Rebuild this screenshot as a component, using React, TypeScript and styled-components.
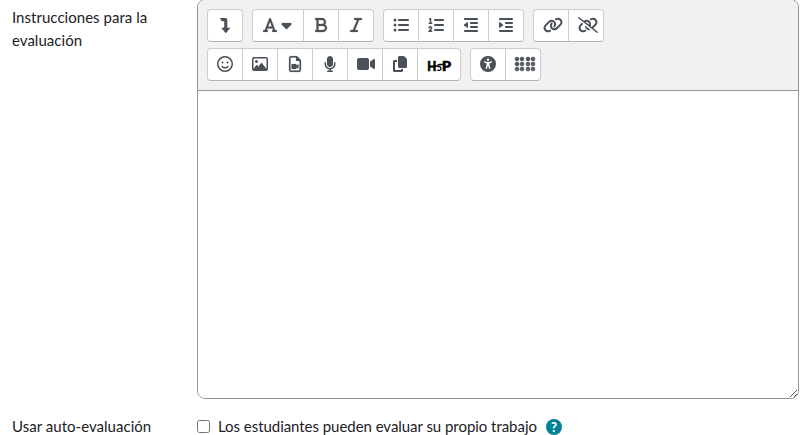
import React from 'react';
import styled, { createGlobalStyle } from 'styled-components';
import type { IconType } from 'react-icons';
import {
  FaFont, FaCaretDown, FaBold, FaItalic, FaListUl, FaListOl, FaOutdent, FaIndent,
  FaLink, FaLinkSlash, FaRegFaceSmile, FaRegImage, FaRegFileVideo, FaMicrophone, FaVideo, FaCopy,
  FaUniversalAccess, FaBraille,
} from 'react-icons/fa6';

const GlobalStyle = createGlobalStyle`
  *, *::before, *::after { box-sizing: border-box; }
  body {
    margin: 0;
    background: #fff;
    color: #1d2125;
    font-family: Lato, "Liberation Sans", sans-serif;
    font-size: 15px;
    line-height: 23px;
    overflow: hidden;
  }
`;

const Form = styled.form`
  width: 807px;
  height: 435px;
  overflow: hidden;
`;

const Row = styled.div<{ $gapTop?: number }>`
  display: grid;
  grid-template-columns: 185px 602px;
  margin-top: ${({ $gapTop = 0 }) => $gapTop}px;
  padding-left: 12px;
`;

const Label = styled.label<{ $top?: number }>`
  padding-top: ${({ $top = 0 }) => $top}px;
  padding-right: 30px;
  letter-spacing: 0.03px;
`;

const Editor = styled.div`
  position: relative;
  height: 400px;
  margin-top: -1px;
  border: 1px solid #8f959e;
  border-radius: 8px;
  overflow: hidden;
`;

const Toolbar = styled.div`
  display: flex;
  flex-direction: column;
  gap: 6px;
  height: 91px;
  padding: 9px 9px 0;
  background: #f1f1f1;
  border-bottom: 1px solid #8f959e;
`;

const ToolRow = styled.div`
  display: flex;
  gap: 9px;
`;

const Group = styled.div`
  display: flex;
  height: 33px;
  background: #fff;
  border: 1px solid #ccc;
  border-bottom-color: #b3b3b3;
  border-radius: 4px;
`;

const ToolButton = styled.button`
  display: flex;
  align-items: center;
  padding: 0 9px 2px;
  border: 0;
  background: none;
  color: #495057;

  & + & {
    border-left: 1px solid #ccc;
  }
`;

const Glyph = styled.span<{ $box?: number; $w?: number; $stroke?: number }>`
  display: flex;
  justify-content: safe center;
  width: ${({ $box = 16 }) => $box}px;

  svg {
    flex: none;
    display: block;
    width: ${({ $w = 16 }) => $w}px;
    height: 16px;
    overflow: visible;
    stroke-width: ${({ $stroke = 0 }) => $stroke};
  }
`;

const TextArea = styled.div`
  height: 308px;
  background: #fff;
`;

const ResizeGrip = styled.svg`
  position: absolute;
  right: 0;
  bottom: 0;
`;

const CheckRow = styled.div`
  display: flex;
  align-items: center;
  height: 23px;
`;

const Checkbox = styled.input`
  width: 13px;
  height: 13px;
  margin: 0 8px 0 0;
`;

const CheckLabel = styled.label`
  letter-spacing: -0.045px;
`;

const Help = styled.span`
  display: flex;
  align-items: center;
  justify-content: center;
  width: 16px;
  height: 16px;
  margin-left: 9px;
  border-radius: 50%;
  background: #008196;
  color: #fff;
  font-size: 13px;
  font-weight: 900;
  line-height: 16px;
`;

type ToolProps = { icon: IconType; w?: number; stroke?: number };

const Icon = ({ icon: Shape, w = 16, stroke }: ToolProps) => (
  <Glyph $w={w} $stroke={stroke}><Shape /></Glyph>
);

const Tool = (props: ToolProps) => (
  <ToolButton type="button"><Icon {...props} /></ToolButton>
);

const LevelDown = () => (
  <Glyph $w={12}>
    <svg viewBox="0 0 12 16" fill="currentColor">
      <path d="M.8 1H6.3A2 2 0 0 1 8.3 3V10.8H11.4L6.8 16.3 2.1 10.8H5.2V4.2H2.7Z" />
    </svg>
  </Glyph>
);

const H5P = () => (
  <Glyph $box={24} $w={24} $stroke={0.6}>
    <svg viewBox="0 0 24 16" fill="#000" stroke="#000" fontFamily="Lato, sans-serif" fontWeight="900">
      <text x="0.3" y="14.5" fontSize="12.5" textLength="9" lengthAdjust="spacingAndGlyphs">H</text>
      <text x="9.5" y="14.5" fontSize="9.5" textLength="5.5" lengthAdjust="spacingAndGlyphs" strokeWidth="0">5</text>
      <text x="15" y="14.5" fontSize="12.5" textLength="9" lengthAdjust="spacingAndGlyphs">P</text>
      <path strokeWidth="1.3" d="M6.5 10H11M12 8.5H17" />
    </svg>
  </Glyph>
);

export default function App() {
  return (
    <>
      <GlobalStyle />
      <Form>
        <Row>
          <Label $top={6}>Instrucciones para la evaluación</Label>
          <Editor>
            <Toolbar>
              <ToolRow>
                <Group><ToolButton type="button"><LevelDown /></ToolButton></Group>
                <Group>
                  <ToolButton type="button">
                    <Icon icon={FaFont} w={14} stroke={5} />
                    <Icon icon={FaCaretDown} w={11} stroke={8} />
                  </ToolButton>
                  <Tool icon={FaBold} w={12} stroke={8} />
                  <Tool icon={FaItalic} w={12} stroke={8} />
                </Group>
                <Group>
                  <Tool icon={FaListUl} />
                  <Tool icon={FaListOl} />
                  <Tool icon={FaOutdent} w={14} />
                  <Tool icon={FaIndent} w={14} />
                </Group>
                <Group>
                  <Tool icon={FaLink} w={20} />
                  <Tool icon={FaLinkSlash} w={20} />
                </Group>
              </ToolRow>
              <ToolRow>
                <Group>
                  <Tool icon={FaRegFaceSmile} />
                  <Tool icon={FaRegImage} />
                  <Tool icon={FaRegFileVideo} w={12} stroke={6} />
                  <Tool icon={FaMicrophone} w={12} />
                  <Tool icon={FaVideo} w={18} />
                  <Tool icon={FaCopy} />
                  <ToolButton type="button"><H5P /></ToolButton>
                </Group>
                <Group>
                  <Tool icon={FaUniversalAccess} />
                  <Tool icon={FaBraille} w={20} stroke={16} />
                </Group>
              </ToolRow>
            </Toolbar>
            <TextArea role="textbox" />
            <ResizeGrip width="9" height="9" viewBox="0 0 9 9" stroke="#555" fill="none">
              <path d="M1 8 8 1M5 8 8 5" />
            </ResizeGrip>
          </Editor>
        </Row>
        <Row $gapTop={16}>
          <Label>Usar auto-evaluación</Label>
          <CheckRow>
            <Checkbox type="checkbox" id="self" />
            <CheckLabel htmlFor="self">Los estudiantes pueden evaluar su propio trabajo</CheckLabel>
            <Help>?</Help>
          </CheckRow>
        </Row>
      </Form>
    </>
  );
}
